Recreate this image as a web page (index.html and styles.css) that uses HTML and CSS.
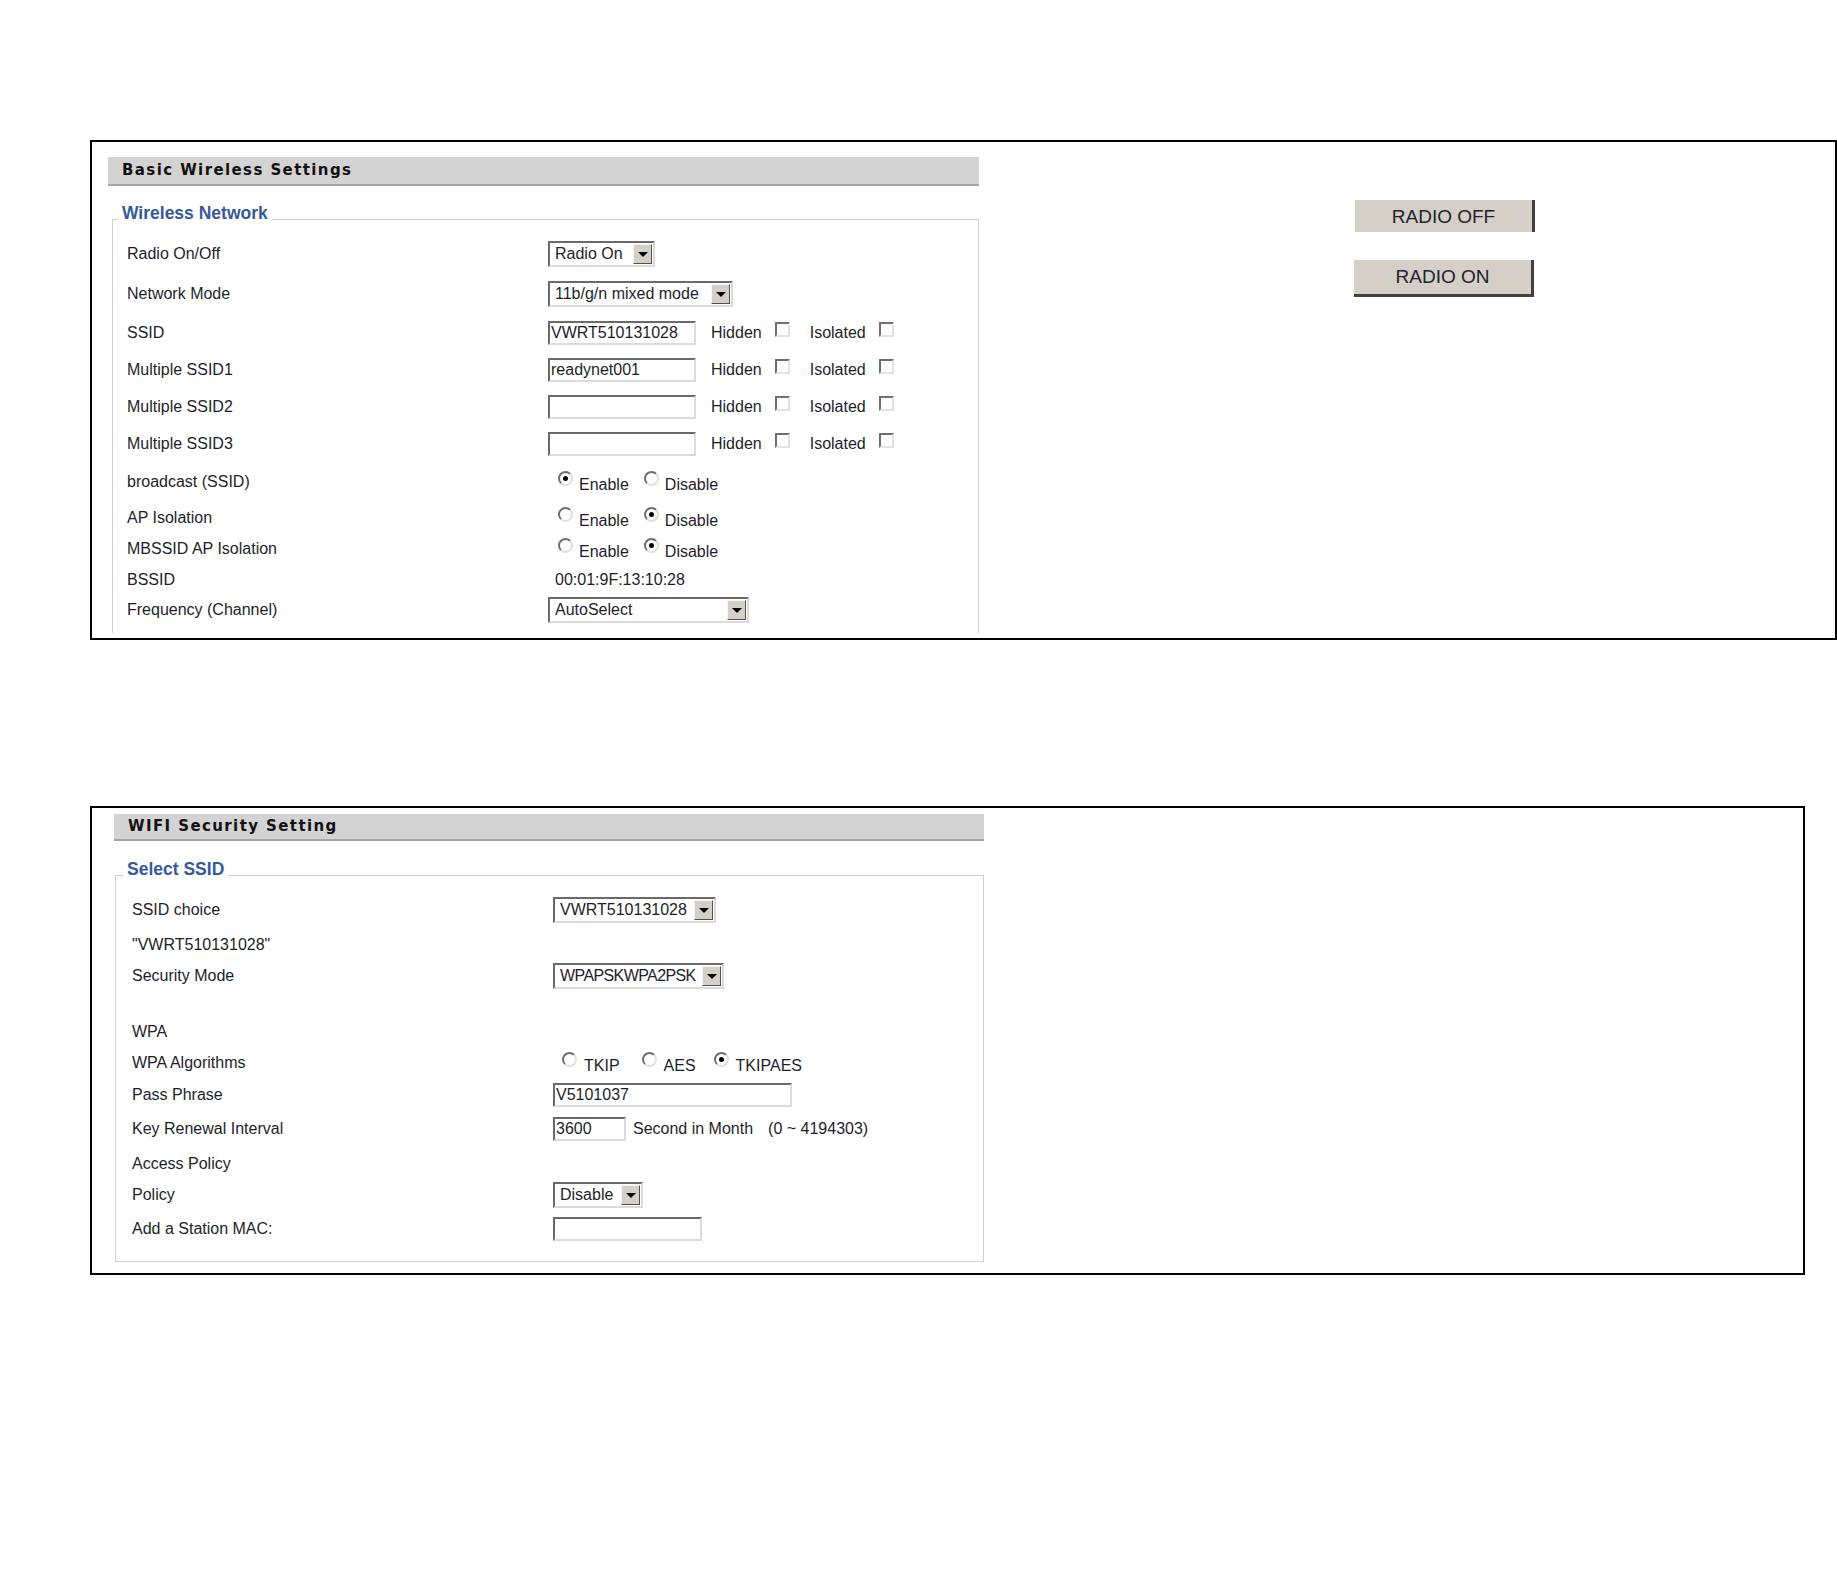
FILE: index.html
```html
<!DOCTYPE html>
<html lang="en">
<head>
  <meta charset="UTF-8">
  <meta name="viewport" content="width=device-width, initial-scale=1.0">
  <title>Wireless Settings</title>
  <link rel="stylesheet" href="styles.css">
</head>
<body>
  <!-- Basic wireless -->
  <div class="panel panel-wireless">
    <div class="settings">
      <div class="section-title">Basic Wireless Settings</div>
      <fieldset class="group group-wireless">
        <legend>Wireless Network</legend>

        <div class="row r40">
          <div class="label">Radio On/Off</div>
          <div class="field">
            <span class="select sel-radio"><span class="select-value">Radio On</span><span class="select-arrow"></span></span>
          </div>
        </div>
        <div class="row r40">
          <div class="label">Network Mode</div>
          <div class="field">
            <span class="select sel-mode"><span class="select-value">11b/g/n mixed mode</span><span class="select-arrow"></span></span>
          </div>
        </div>
        <div class="row r37">
          <div class="label">SSID</div>
          <div class="field">
            <input class="text-input in-ssid" type="text" value="VWRT510131028">
            <span class="opt-label">Hidden</span><span class="check"></span>
            <span class="opt-label isolated">Isolated</span><span class="check"></span>
          </div>
        </div>
        <div class="row r37">
          <div class="label">Multiple SSID1</div>
          <div class="field">
            <input class="text-input in-ssid" type="text" value="readynet001">
            <span class="opt-label">Hidden</span><span class="check"></span>
            <span class="opt-label isolated">Isolated</span><span class="check"></span>
          </div>
        </div>
        <div class="row r37">
          <div class="label">Multiple SSID2</div>
          <div class="field">
            <input class="text-input in-ssid" type="text" value="">
            <span class="opt-label">Hidden</span><span class="check"></span>
            <span class="opt-label isolated">Isolated</span><span class="check"></span>
          </div>
        </div>
        <div class="row r37">
          <div class="label">Multiple SSID3</div>
          <div class="field">
            <input class="text-input in-ssid" type="text" value="">
            <span class="opt-label">Hidden</span><span class="check"></span>
            <span class="opt-label isolated">Isolated</span><span class="check"></span>
          </div>
        </div>
        <div class="row r40">
          <div class="label">broadcast (SSID)</div>
          <div class="field radios">
            <span class="radio checked"></span><span class="radio-text r-enable">Enable</span>
            <span class="radio"></span><span class="radio-text">Disable</span>
          </div>
        </div>
        <div class="row r32">
          <div class="label">AP Isolation</div>
          <div class="field radios">
            <span class="radio"></span><span class="radio-text r-enable">Enable</span>
            <span class="radio checked"></span><span class="radio-text">Disable</span>
          </div>
        </div>
        <div class="row r30">
          <div class="label">MBSSID AP Isolation</div>
          <div class="field radios">
            <span class="radio"></span><span class="radio-text r-enable">Enable</span>
            <span class="radio checked"></span><span class="radio-text">Disable</span>
          </div>
        </div>
        <div class="row r32">
          <div class="label">BSSID</div>
          <div class="field"><span class="plain-value">00:01:9F:13:10:28</span></div>
        </div>
        <div class="row r28">
          <div class="label">Frequency (Channel)</div>
          <div class="field">
            <span class="select sel-channel"><span class="select-value">AutoSelect</span><span class="select-arrow"></span></span>
          </div>
        </div>
      </fieldset>
    </div>

    <div class="radio-buttons">
      <button class="btn btn-off" type="button">RADIO OFF</button>
      <button class="btn btn-on" type="button">RADIO ON</button>
    </div>
  </div>

  <!-- Security -->
  <div class="panel panel-security">
    <div class="settings">
      <div class="section-title">WIFI Security Setting</div>
      <fieldset class="group group-security">
        <legend>Select SSID</legend>

        <div class="row r40">
          <div class="label">SSID choice</div>
          <div class="field">
            <span class="select sel-ssid"><span class="select-value">VWRT510131028</span><span class="select-arrow"></span></span>
          </div>
        </div>
        <div class="row r30">
          <div class="label">"VWRT510131028"</div>
        </div>
        <div class="row r32">
          <div class="label">Security Mode</div>
          <div class="field">
            <span class="select sel-security"><span class="select-value tight">WPAPSKWPA2PSK</span><span class="select-arrow"></span></span>
          </div>
        </div>
        <div class="row r24"></div>
        <div class="row r32">
          <div class="label">WPA</div>
        </div>
        <div class="row r30">
          <div class="label">WPA Algorithms</div>
          <div class="field radios algos">
            <span class="radio"></span><span class="radio-text a-tkip">TKIP</span>
            <span class="radio"></span><span class="radio-text a-aes">AES</span>
            <span class="radio checked"></span><span class="radio-text">TKIPAES</span>
          </div>
        </div>
        <div class="row r34">
          <div class="label">Pass Phrase</div>
          <div class="field">
            <input class="text-input in-pass" type="text" value="V5101037">
          </div>
        </div>
        <div class="row r34">
          <div class="label">Key Renewal Interval</div>
          <div class="field">
            <input class="text-input in-key" type="text" value="3600">
            <span class="unit">Second in Month</span>
            <span class="range">(0 ~ 4194303)</span>
          </div>
        </div>
        <div class="row r36">
          <div class="label">Access Policy</div>
        </div>
        <div class="row r26">
          <div class="label">Policy</div>
          <div class="field">
            <span class="select sel-policy"><span class="select-value">Disable</span><span class="select-arrow"></span></span>
          </div>
        </div>
        <div class="row r42">
          <div class="label">Add a Station MAC:</div>
          <div class="field">
            <input class="text-input in-mac" type="text" value="">
          </div>
        </div>
      </fieldset>
    </div>
  </div>
</body>
</html>
```

FILE: styles.css
```css
* {
  margin: 0;
  padding: 0;
  box-sizing: border-box;
}

body {
  background: #fff;
  color: #1e1e2a;
  font-family: "Liberation Sans", Arial, sans-serif;
  font-size: 16px;
  height: 1584px;
  overflow: hidden;
}

/* Outer panels */
.panel {
  border: 2px solid #000;
  margin-left: 90px;
  display: flex;
  overflow: hidden;
}

.panel-wireless {
  margin-top: 140px;
  width: 1747px;
  height: 500px;
}

.panel-wireless .settings {
  width: 871px;
  height: 476px;
  margin: 15px 0 0 16px;
  overflow: hidden;
}

.panel-security {
  margin-top: 166px;
  width: 1715px;
  height: 469px;
}

.panel-security .settings {
  width: 870px;
  margin: 6px 0 0 22px;
}

/* Section header bar */
.section-title {
  background: #d3d3d3;
  border-bottom: 2px solid #a6a6a6;
  font-family: "DejaVu Sans", Verdana, sans-serif;
  font-weight: bold;
  font-size: 15px;
  letter-spacing: 1.4px;
  color: #111;
  padding-left: 14px;
  height: 29px;
  line-height: 27px;
}

.panel-security .section-title {
  height: 27px;
  line-height: 25px;
}

/* Fieldset */
.group {
  border: 1px solid #d2d2d2;
  padding: 0 0 40px 14px;
}

.group-wireless {
  margin: 18px 0 0 4px;
  width: 867px;
}

.group-security {
  margin: 19px 0 0 1px;
  width: 869px;
  padding: 0 0 11px 16px;
}

.group legend {
  font-family: "Liberation Sans", Arial, sans-serif;
  font-weight: bold;
  font-size: 17.5px;
  line-height: 18px;
  color: #36599d;
  padding: 0 4px 12px;
  margin-left: -9px;
}

/* Rows */
.row {
  display: flex;
  align-items: center;
}

.r24 { height: 24px; }
.r26 { height: 26px; }
.r28 { height: 28px; }
.r30 { height: 30px; }
.r32 { height: 32px; }
.r34 { height: 34px; }
.r36 { height: 36px; }
.r37 { height: 37px; }
.r38 { height: 38px; }
.r40 { height: 40px; }
.r42 { height: 42px; }

.label {
  width: 421px;
  flex-shrink: 0;
}

.field {
  display: flex;
  align-items: center;
}

.plain-value {
  padding-left: 7px;
}

/* Fake select boxes */
.select {
  display: inline-flex;
  height: 26px;
  border: 2px solid;
  border-color: #6a6a6a #dadada #dadada #6a6a6a;
  background: #fff;
}

.select-value {
  flex: 1;
  padding-left: 5px;
  line-height: 22px;
  white-space: nowrap;
  overflow: hidden;
}

.select-value.tight {
  letter-spacing: -0.6px;
}

.select-arrow {
  width: 19px;
  flex-shrink: 0;
  margin: 1px;
  background: #d4d0c8;
  border: 1px solid;
  border-color: #f4f4f4 #505050 #505050 #f4f4f4;
  display: flex;
  align-items: center;
  justify-content: center;
}

.select-arrow::after {
  content: "";
  border-left: 5px solid transparent;
  border-right: 5px solid transparent;
  border-top: 5px solid #000;
}

.sel-radio { width: 107px; }
.sel-mode { width: 185px; }
.sel-channel { width: 201px; }
.sel-ssid { width: 163px; }
.sel-security { width: 171px; }
.sel-policy { width: 90px; }

/* Text inputs */
.text-input {
  height: 24px;
  border: 2px solid;
  border-color: #6a6a6a #dcdcdc #dcdcdc #6a6a6a;
  padding: 0 1px;
  font-family: "Liberation Sans", Arial, sans-serif;
  font-size: 16px;
  color: #1e1e2a;
  background: #fff;
  outline: none;
}

.in-ssid { width: 148px; }
.in-pass { width: 239px; }
.in-key { width: 73px; }
.in-mac { width: 149px; }

/* Checkboxes */
.opt-label {
  margin-left: 15px;
}

.opt-label.isolated {
  margin-left: 20px;
}

.check {
  width: 15px;
  height: 15px;
  margin: 0 0 6px 13px;
  border: 2px solid;
  border-color: #6e6e6e #e2e2e2 #e2e2e2 #6e6e6e;
  background: #fff;
}

/* Radios */
.radios {
  padding-left: 10px;
  align-items: flex-start;
}

.radio {
  width: 15px;
  height: 15px;
  border-radius: 50%;
  border: 2px solid;
  border-color: #6e6e6e #e0e0e0 #e0e0e0 #6e6e6e;
  background: #fff;
  display: flex;
  align-items: center;
  justify-content: center;
}

.radio.checked::after {
  content: "";
  width: 5px;
  height: 5px;
  border-radius: 50%;
  background: #000;
}

.radio-text {
  margin: 6px 0 0 6px;
  line-height: 16px;
}

.r-enable {
  margin-right: 15px;
}

.algos {
  padding-left: 9px;
}

.algos .radio-text {
  margin-left: 7px;
}

.a-tkip { margin-right: 22px; }
.a-aes { margin-right: 18px; }

.unit {
  margin-left: 7px;
}

.range {
  margin-left: 15px;
}

/* Radio on / off buttons */
.radio-buttons {
  display: flex;
  flex-direction: column;
  margin: 58px 0 0 376px;
}

.btn {
  background: #d4d0c8;
  border: none;
  font-family: "Liberation Sans", Arial, sans-serif;
  font-size: 19px;
  color: #22222e;
  text-align: center;
}

.btn-off {
  width: 180px;
  height: 32px;
  border-right: 3px solid #404040;
  padding-top: 2px;
}

.btn-on {
  width: 180px;
  height: 37px;
  margin: 28px 0 0 -1px;
  border-right: 3px solid #404040;
  border-bottom: 3px solid #404040;
}
```
